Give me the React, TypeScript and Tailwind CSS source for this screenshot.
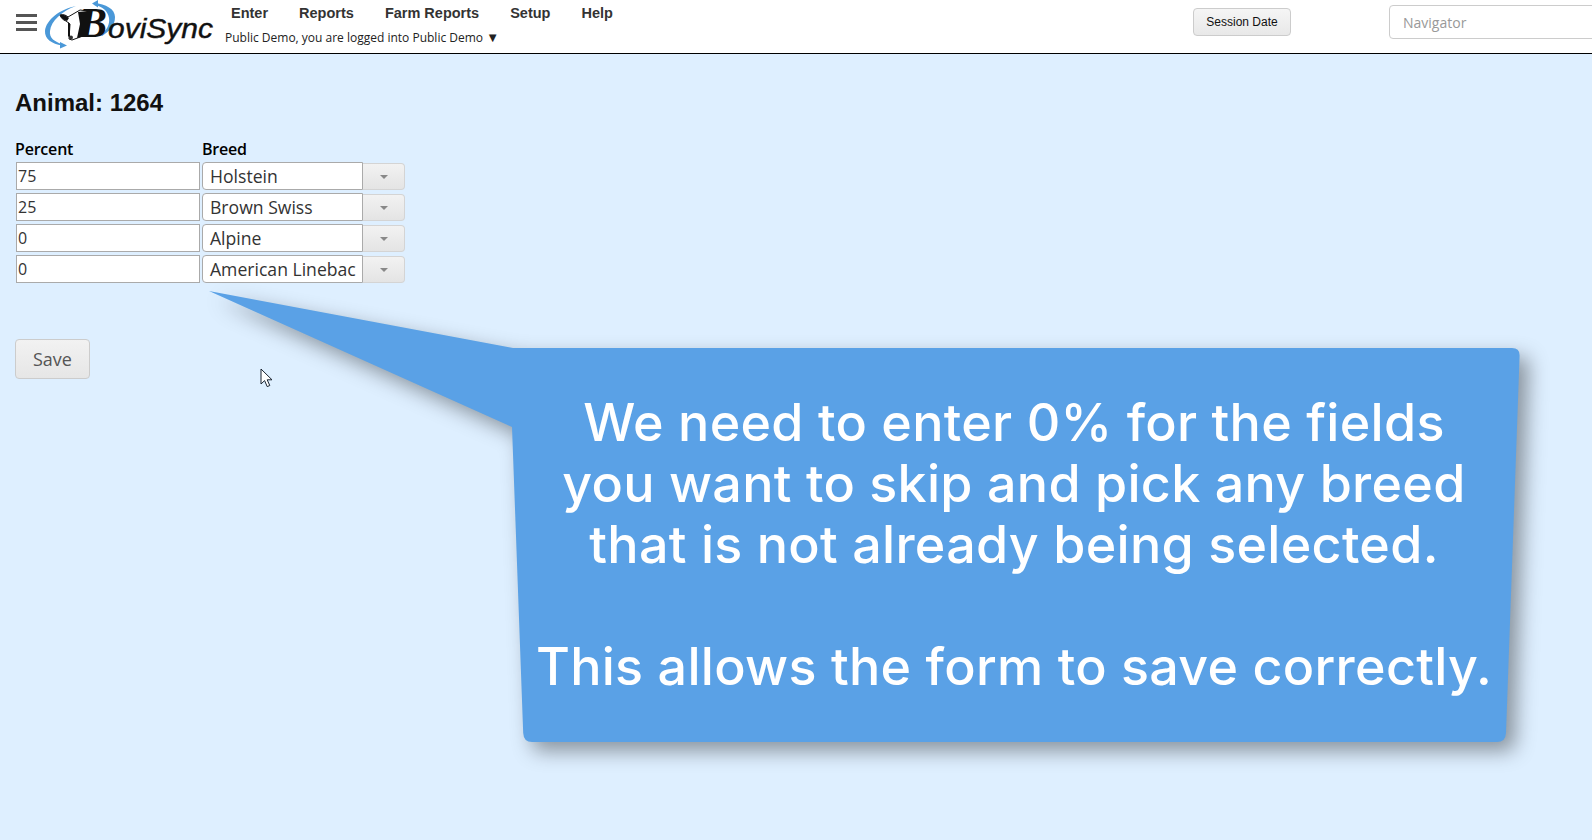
const navItems = ['Enter', 'Reports', 'Farm Reports', 'Setup', 'Help'];

const rows = [
  { percent: '75', breed: 'Holstein' },
  { percent: '25', breed: 'Brown Swiss' },
  { percent: '0', breed: 'Alpine' },
  { percent: '0', breed: 'American Linebac' },
];

const Logo = () => (
  <svg width="172" height="52" viewBox="44 0 172 52" className="shrink-0">
    {/* swirl round the cow */}
    <path d="M76 6C60 9 46 20 45 31C44.500 39 52 44 62 45.500L62 44C55 42 49 38 50 31C51 21 62 11 76 6Z" fill="#4a98d8" />
    <path d="M60 42L67 45.500L60 48.500Z" fill="#4a98d8" />
    <path d="M94 3C106 4 115 9 115 17C115 25 110 31 102 36L101 35C107 30 110 24 109 18C108 11 102 6 94 5Z" fill="#4a98d8" />
    <path d="M98 0L92 3.500L98 7.500Z" fill="#4a98d8" />
    {/* cow head */}
    <path d="M60 15C63 14 66 15 68 17L80 10L88 11L83 36L72 40L69 39L70 24L66 21C63 20 61 18 60 15Z" fill="#fff" stroke="#111" strokeWidth="1" />
    <path d="M60 15C63 14 66 15 69 18L67 21C63 20 61 18 60 15Z" fill="#111" />
    <path d="M68 22L70 24L70 38L68 36Z" fill="#111" />
    <path d="M78 12L88 11L84 36L77 38L80 24Z" fill="#111" />
    <circle cx="71" cy="37.500" r="2" fill="#333" />
    <text x="79" y="37" fontFamily="'Liberation Serif', serif" fontStyle="italic" fontWeight="700" fontSize="42" fill="#111">B</text>
    <text x="108" y="38" fontFamily="'Liberation Sans', sans-serif" fontStyle="italic" fontSize="27" fill="#111" stroke="#111" strokeWidth="0.4" textLength="105" lengthAdjust="spacingAndGlyphs">oviSync</text>
  </svg>
);

const Header = () => (
  <header className="flex h-[54px] items-start border-b border-black bg-white">
    <div className="ml-[16px] mt-[14px] flex w-[21px] shrink-0 flex-col gap-[4px]">
      <div className="h-[3px] bg-[#555]" />
      <div className="h-[3px] bg-[#555]" />
      <div className="h-[3px] bg-[#555]" />
    </div>
    <div className="ml-[7px]">
      <Logo />
    </div>
    <div className="ml-[8px] flex flex-col">
      <nav className="mt-[4px] ml-[7px] flex gap-[31px] text-[14.500px] leading-[18px] font-bold text-[#333] [font-family:'Liberation_Sans',sans-serif]">
        {navItems.map((item) => (
          <span key={item}>{item}</span>
        ))}
      </nav>
      <div className="mt-[7px] ml-[1px] text-[12px] leading-[16px] text-[#222] [font-family:'Open_Sans',sans-serif]">
        Public Demo, you are logged into Public Demo <span className="text-[13px]">▼</span>
      </div>
    </div>
    <div className="ml-auto mt-[8px] flex h-[28px] w-[98px] items-center justify-center rounded-[4px] border border-[#ccc] bg-linear-to-b from-[#f5f5f5] to-[#e8e8e8] text-[12px] text-[#111] [font-family:'Liberation_Sans',sans-serif]">
      Session Date
    </div>
    <div className="ml-[98px] mr-[-40px] mt-[5px] flex h-[34px] w-[243px] shrink-0 items-center rounded-[4px] border border-[#ccc] bg-white pl-[13px] text-[14px] text-[#999] [font-family:'Open_Sans',sans-serif]">
      Navigator
    </div>
  </header>
);

const BreedForm = () => (
  <main className="px-[15px]">
    <h1 className="mt-[34px] text-[24px] leading-[30px] font-bold text-[#111] [font-family:'Liberation_Sans',sans-serif]">
      Animal: 1264
    </h1>
    <div className="mt-[20px] flex text-[16px] leading-[22px] font-semibold tracking-[-0.2px] text-black [font-family:'Open_Sans',sans-serif]">
      <span className="w-[187px]">Percent</span>
      <span>Breed</span>
    </div>
    <div className="mt-[2px] ml-[1px] flex flex-col gap-[3px] [font-family:'Open_Sans',sans-serif]">
      {rows.map((row) => (
        <div key={row.breed} className="flex h-[28px] items-stretch">
          <div className="flex w-[184px] items-center border border-[#aaa] bg-white pl-[1px] text-[16px] text-[#333]">
            {row.percent}
          </div>
          <div className="ml-[2px] flex w-[161px] items-center rounded-l-[4px] border border-[#aaa] bg-white pl-[7px] text-[17.600px] whitespace-nowrap text-[#333]">
            {row.breed}
          </div>
          <div className="mt-[1px] flex w-[42px] items-center justify-center rounded-r-[4px] border border-l-0 border-[#d4d4d4] bg-linear-to-b from-[#f2f2f2] to-[#e4e4e4]">
            <div className="h-0 w-0 border-x-[4px] border-t-[4px] border-x-transparent border-t-[#888]" />
          </div>
        </div>
      ))}
    </div>
    <button className="mt-[56px] flex h-[40px] w-[75px] items-center justify-center rounded-[4px] border border-[#ccc] bg-linear-to-b from-[#f2f2f2] to-[#e6e6e6] text-[18px] text-[#555] [font-family:'Open_Sans',sans-serif]">
      Save
    </button>
  </main>
);

const Callout = () => (
  <>
    <svg width="1592" height="840" viewBox="0 0 1592 840" className="pointer-events-none absolute top-0 left-0 drop-shadow-[9px_9px_10px_rgba(0,0,0,0.38)]">
      <path
        d="M209 291L513 348H1512Q1520 348 1519.600 356L1506 733Q1505.600 742 1497 742H532Q523.600 742 523.200 733L512 427Z"
        fill="#5aa1e6"
      />
    </svg>
    <div className="absolute top-[392px] left-[514px] w-[1000px] text-center text-[52px] leading-[61px] font-medium tracking-[0.3px] whitespace-nowrap text-white [font-family:Inter,sans-serif]">
      <div>We need to enter 0% for the fields</div>
      <div>you want to skip and pick any breed</div>
      <div>that is not already being selected.</div>
      <div>&nbsp;</div>
      <div>This allows the form to save correctly.</div>
    </div>
    <svg width="14" height="20" viewBox="0 0 14 20" className="absolute top-[368px] left-[260px]">
      <path d="M1 1V16L4.600 12.600L7.200 18.600L9.800 17.500L7.200 11.800H12Z" fill="#fff" stroke="#1a2330" strokeWidth="1" />
    </svg>
  </>
);

export default function App() {
  return (
    <div className="relative h-[840px] w-[1592px] overflow-hidden bg-[#deefff]">
      <Header />
      <BreedForm />
      <Callout />
    </div>
  );
}
